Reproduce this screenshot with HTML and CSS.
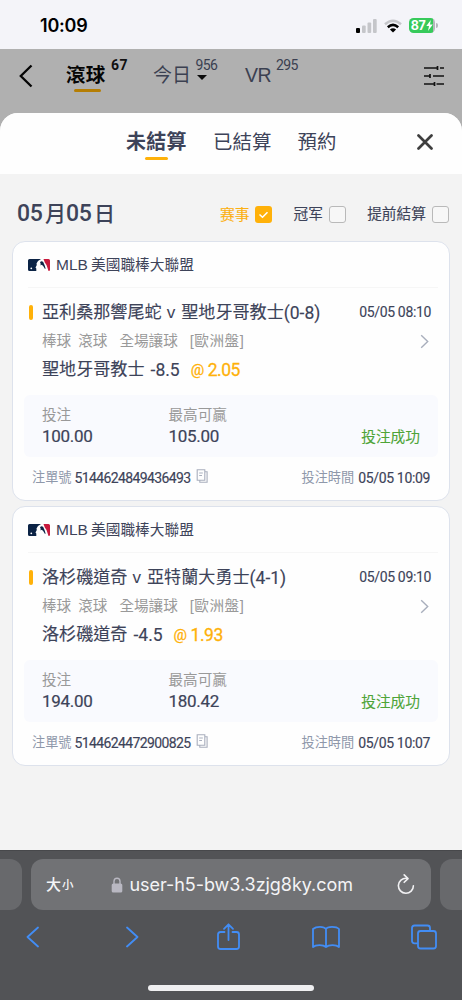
FILE: index.html
```html
<!DOCTYPE html>
<html lang="zh-Hant">
<head>
<meta charset="utf-8">
<meta name="viewport" content="width=device-width, initial-scale=1">
<title>注單</title>
<link rel="stylesheet" href="styles.css">
</head>
<body>
<svg width="0" height="0" class="defs" aria-hidden="true">
  <symbol id="mlb" viewBox="0 0 22 12">
    <path d="M1.500 0H13L10 2L8.500 4.500L8.800 6L7.500 8.500L8.300 9.500V12H1.500Q0 12 0 10.500V1.500Q0 0 1.500 0Z" fill="#0b2345"/>
    <path d="M15.500 0H20.500Q22 0 22 1.500V11.500L20.500 12L18.500 6L16.800 3.500Z" fill="#c8193c"/>
    <path d="M12 3.200Q13.500 1.600 15.200 3L16.700 6.500L17.600 9.500L17 10L15 6.800L13.500 5.800L12.600 6.500V4.500Z" fill="#0b2345"/>
    <circle cx="3.300" cy="9.300" r=".9" fill="#fff"/>
  </symbol>
  <symbol id="copy" viewBox="0 0 12 14">
    <path d="M1.200 .7H8.800V11.200H1.200ZM9 2.800H11.100V13.200H3.800V11.400M3.200 4H6.800M3.200 6.500H6" fill="none" stroke="#a9afbd" stroke-width="1.100"/>
  </symbol>
  <symbol id="more" viewBox="0 0 9 15">
    <path d="M1.200 1.200L7.700 7.500L1.200 13.800" fill="none" stroke="#a8aebc" stroke-width="1.400"/>
  </symbol>
</svg>

<header class="status">
  <span class="clock">10:09</span>
  <svg class="signal" width="22" height="14" viewBox="0 0 22 14"><rect x="0" y="9" width="4" height="5" rx="1" fill="#000"/><rect x="6" y="6.500" width="3.700" height="7.500" rx="1" fill="#c5c6ca"/><rect x="11.500" y="3.500" width="3.700" height="10.500" rx="1" fill="#c5c6ca"/><rect x="17" y="0" width="3.700" height="14" rx="1" fill="#c5c6ca"/></svg>
  <svg class="wifi" width="18" height="14" viewBox="0 0 18 14"><g fill="none" stroke-width="2.500"><path d="M1 5.200Q9 -1.800 17 5.200" stroke="#c5c6ca"/><path d="M3.800 8.200Q9 3.600 14.200 8.200" stroke="#000"/></g><path d="M9 13.500L5.900 10.500Q9 8 12.100 10.500Z" fill="#000"/></svg>
  <span class="battery"><span>87</span><svg width="7" height="11" viewBox="0 0 7 11"><path d="M4.800 0L.3 6H3L2 11L6.800 4.600H4Z" fill="#fff"/></svg></span><i class="nub"></i>
</header>

<nav class="nav">
  <svg class="nav-back" width="14" height="24" viewBox="0 0 14 24"><path d="M12.500 1.500L1.800 12L12.500 22.500" fill="none" stroke="#050505" stroke-width="2.300"/></svg>
  <span class="nav-item live">滾球</span><sup class="c67">67</sup>
  <span class="nav-item today">今日</span>
  <span class="today-side"><sup>956</sup><i class="caret"></i></span>
  <span class="nav-item vr">VR</span><sup>295</sup>
  <svg class="filter" width="20" height="20" viewBox="0 0 20 20"><path d="M0 2H14M16 2H20M0 10H6.500M9 10H20M0 18H10.500M12.500 18H20M13.500 0V4M6 8V12M10.500 16V20" fill="none" stroke="#111" stroke-width="1.700"/></svg>
</nav>

<main class="sheet">
  <div class="tabs">
    <span class="tab active">未結算</span><span class="tab">已結算</span><span class="tab">預約</span>
    <svg class="close" width="16" height="16" viewBox="0 0 16 16"><path d="M1.500 1.500L14.500 14.500M14.500 1.500L1.500 14.500" stroke="#3e3e3e" stroke-width="2.700" stroke-linecap="round"/></svg>
  </div>

  <div class="dayline">
    <h2><b>05</b>月<b>05</b>日</h2>
    <label class="chk on">赛事<i><svg width="17" height="17" viewBox="0 0 17 17"><path d="M4.500 8.500L7.500 11.300L12.500 6.200" fill="none" stroke="#fff" stroke-width="1.500"/></svg></i></label>
    <label class="chk">冠军<i></i></label>
    <label class="chk">提前結算<i></i></label>
  </div>

  <article class="card">
    <div class="league"><svg width="22" height="12"><use href="#mlb"/></svg><span class="mlb">MLB</span><span>美國職棒大聯盟</span></div>
    <div class="title"><i class="bar"></i><span>亞利桑那響尾蛇</span><span class="v">v</span><span>聖地牙哥教士</span><span class="din">(0-8)</span><time>05/05 08:10</time></div>
    <div class="meta"><span>棒球</span><span>滾球</span><span>全場讓球</span><span>[歐洲盤]</span><svg width="9" height="15"><use href="#more"/></svg></div>
    <div class="pick"><span>聖地牙哥教士</span><span class="din">-8.5</span><span class="at">@</span><span class="din odds">2.05</span></div>
    <div class="panel">
      <div><small>投注</small><b>100.00</b></div>
      <div><small>最高可贏</small><b>105.00</b></div>
      <em>投注成功</em>
    </div>
    <div class="foot"><span>注單號</span><b class="id">5144624849436493</b><svg width="12" height="14"><use href="#copy"/></svg><span class="when">投注時間</span><b class="stamp">05/05 10:09</b></div>
  </article>

  <article class="card">
    <div class="league"><svg width="22" height="12"><use href="#mlb"/></svg><span class="mlb">MLB</span><span>美國職棒大聯盟</span></div>
    <div class="title"><i class="bar"></i><span>洛杉磯道奇</span><span class="v">v</span><span>亞特蘭大勇士</span><span class="din">(4-1)</span><time>05/05 09:10</time></div>
    <div class="meta"><span>棒球</span><span>滾球</span><span>全場讓球</span><span>[歐洲盤]</span><svg width="9" height="15"><use href="#more"/></svg></div>
    <div class="pick"><span>洛杉磯道奇</span><span class="din">-4.5</span><span class="at">@</span><span class="din odds">1.93</span></div>
    <div class="panel">
      <div><small>投注</small><b>194.00</b></div>
      <div><small>最高可贏</small><b>180.42</b></div>
      <em>投注成功</em>
    </div>
    <div class="foot"><span>注單號</span><b class="id">5144624472900825</b><svg width="12" height="14"><use href="#copy"/></svg><span class="when">投注時間</span><b class="stamp">05/05 10:07</b></div>
  </article>
</main>

<footer class="browser">
  <div class="urls">
    <div class="side left"></div>
    <div class="url">
      <span class="big">大</span><span class="small">小</span>
      <svg class="lock" width="12" height="16" viewBox="0 0 12 16"><rect x=".7" y="6.500" width="10.600" height="9" rx="1.600" fill="#b9b8c2"/><path d="M3 7V4.300Q3 1.200 6 1.200T9 4.300V7" fill="none" stroke="#b9b8c2" stroke-width="1.400"/></svg>
      <span class="host">user-h5-bw3.3zjg8ky.com</span>
      <svg class="reload" width="18" height="21" viewBox="0 0 18 21"><path d="M9.500 4.300A7.500 7.500 0 1 0 16.400 11.700M7.200 .9L11 4.600L7.200 8.300" fill="none" stroke="#f1f1f3" stroke-width="1.600" stroke-linecap="round" stroke-linejoin="round"/></svg>
    </div>
    <div class="side right"></div>
  </div>
  <div class="tools">
    <svg class="t-back" width="13" height="22" viewBox="0 0 13 22"><path d="M12 1.500L1.500 11L12 20.500"/></svg>
    <svg class="t-next" width="13" height="22" viewBox="0 0 13 22"><path d="M1 1.500L11.500 11L1 20.500"/></svg>
    <svg class="t-share" width="23" height="28" viewBox="0 0 23 28"><path d="M7.500 9H3.500Q1 9 1 11.500V23.500Q1 26 3.500 26H19.500Q22 26 22 23.500V11.500Q22 9 19.500 9H15.500M11.500 17V1.500M7 5.800L11.500 1.300L16 5.800"/></svg>
    <svg class="t-book" width="28" height="24" viewBox="0 0 28 24"><path d="M14 4V22M14 4Q12.500 1.800 8 1.800T1 4V22Q3 20.200 7.500 20.200T14 22Q16 20.200 20.500 20.200T27 22V4Q25 1.800 20 1.800T14 4Z"/></svg>
    <svg class="t-tabs" width="26" height="26" viewBox="0 0 26 26"><path d="M6.500 19.300H3.500Q1 19.300 1 16.800V4Q1 1.500 3.500 1.500H16.500Q19 1.500 19 4V7M9.500 7H22.500Q25 7 25 9.500V22Q25 24.500 22.500 24.500H9.500Q7 24.500 7 22V9.500Q7 7 9.500 7Z"/></svg>
  </div>
  <div class="home"></div>
</footer>
</body>
</html>
```
FILE: styles.css
```css
* { box-sizing: border-box; }
body {
  margin: 0; width: 462px; height: 1000px; overflow: hidden;
  display: flex; flex-direction: column; background: #b0b0b0; color: #3d4359;
  font-family: "Liberation Sans", "Noto Sans CJK TC", sans-serif; line-height: 1; white-space: nowrap;
}
.defs { display: none; }
i, em { font-style: normal; }
b { font-weight: 400; }
svg { flex: none; display: block; }

.status { height: 49px; flex: none; display: flex; align-items: center; padding: 2px 24px 0 40px; background: #f4f4f9; }
.clock { font: 600 18px/20px Inter, sans-serif; color: #000; width: 316px; letter-spacing: -.2px; }
.wifi { margin-left: 6px; }
.battery {
  width: 26px; height: 15px; margin-left: 7px; border-radius: 4.500px; display: flex; align-items: center; justify-content: center; gap: 1px;
  background: linear-gradient(90deg, #37ca5b 23.500px, #b5b6bb 23.500px); color: #fff; font: 700 12.500px/15px Inter, sans-serif; letter-spacing: -.4px;
}
.nub { width: 1.500px; height: 5px; margin-left: 1px; border-radius: 0 2px 2px 0; background: #b5b6bb; }

.nav { height: 64px; flex: none; display: flex; align-items: flex-start; padding: 0 18px 0 19px; }
.nav-back { margin-top: 15px; }
.nav sup { font: 400 14px/14px Roboto, sans-serif; letter-spacing: -.6px; color: #3a3f50; margin: 9px 0 0 5px; }
.nav .c67 { font-weight: 700; color: #111; letter-spacing: .4px; width: 21px; }
.nav-item { font-size: 19.500px; line-height: 28px; margin-top: 12px; color: #3b4051; }
.live { margin-left: 33px; width: 40px; color: #050505; font-weight: 700; letter-spacing: .3px; }
.live::after { content: ""; display: block; width: 27px; height: 3px; margin: 0 0 0 8px; border-radius: 2px; background: #b57e04; }
.today { margin: 13px 0 0 21px; width: 40px; font-size: 19px; }
.today-side { display: flex; flex-direction: column; width: 26px; }
.today-side sup { margin-left: 2.500px; }
.caret { border: 5px solid transparent; border-top-color: #0a0a0a; border-bottom: 0; margin: 3px 0 0 4px; width: 0; }
.vr { margin-left: 26px; width: 26px; letter-spacing: -.4px; }
.filter { margin: 17px 0 0 auto; }

.sheet { height: 737px; flex: none; background: #f3f3f3; border-radius: 18px 18px 0 0; overflow: hidden; }
.tabs { height: 61px; display: flex; padding: 15px 29px 0 126px; gap: 26px; background: #fefefe; }
.tab { font-size: 19.400px; line-height: 28px; letter-spacing: .1px; }
.tab.active { font-weight: 700; font-size: 20px; letter-spacing: .3px; width: 61px; }
.active::after { content: ""; display: block; width: 23px; height: 3px; margin: 1px auto 0; border-radius: 2px; background: #feb10a; }
.close { margin: 6px 0 0 auto; }

.dayline { height: 67px; display: flex; align-items: center; padding: 13px 12px 0 17px; }
h2 { margin: 0; width: 203px; font-size: 21px; line-height: 26px; font-weight: 500; display: flex; }
h2 b { font: 500 23px/26px Roboto, sans-serif; width: 28px; letter-spacing: -.2px; }
.chk { display: flex; align-items: center; gap: 6px; font-size: 14.700px; line-height: 20px; -webkit-text-stroke: .12px; margin-right: 21.200px; }
.chk:last-child { margin: 0; }
.chk i { width: 17px; height: 17px; border: 1px solid #b9b9b9; border-radius: 3px; background: #f7f7f7; margin-top: 1px; }
.chk.on { color: #fcb012; font-family: "Noto Sans CJK SC", sans-serif; }
.chk.on i { border: 0; background: #ffb109; }

.card { height: 260px; margin: 0 12px 5px; border: 1px solid #dde2ec; border-radius: 13px; background: #fefefe; padding: 0 11px; }
.card > div { display: flex; align-items: center; }
.league { height: 46px; margin-left: 4px; padding-top: 1px; border-bottom: 1px solid #f6f6f6; font-size: 14.700px; }
.mlb { font-size: 15.500px; margin: 0 5px 0 6px; width: 30px; }
.title { height: 49px; font-size: 17.100px; -webkit-text-stroke: .12px; }
.bar { width: 4px; height: 15px; border-radius: 2px; background: #ffb109; margin: 0 9px 0 5px; }
.v { margin: 0 6px 0 5px; -webkit-text-stroke: 0; }
.din { font: 400 17.500px/20px Roboto, sans-serif; -webkit-text-stroke: .15px; }
.title time { font: 400 14px/16px Roboto, sans-serif; letter-spacing: -.35px; margin: -2px 7px 0 auto; }
.meta { height: 9px; padding-left: 18px; color: #999; font-size: 14.600px; }
.meta span:nth-child(2) { margin-left: 7px; }
.meta span:nth-child(3) { margin-left: 12px; }
.meta span:nth-child(4) { margin-left: 12px; letter-spacing: .5px; }
.meta svg { margin: 0 9px 0 auto; }
.pick { height: 49px; padding: 0 0 1px 18px; font-size: 17.100px; -webkit-text-stroke: .12px; }
.pick .din { margin-left: 6px; }
.at { font: 400 15px/20px Roboto, sans-serif; width: 13px; margin-left: 11px; color: #feb10a; -webkit-text-stroke: .3px; }
.pick .odds { color: #feb10a; margin-left: 4px; letter-spacing: -.5px; -webkit-text-stroke: .3px; }
.panel { height: 62px; padding-left: 18px; border-radius: 6px; background: #f9fafe; }
.panel div { width: 126.500px; display: flex; flex-direction: column; }
.panel small { font-size: 14.600px; line-height: 20px; color: #999; }
.panel b { font: 400 17px/23px Roboto, sans-serif; letter-spacing: -.3px; -webkit-text-stroke: .2px; }
.panel em { color: #4ea437; font-size: 14.700px; -webkit-text-stroke: .1px; margin: 22px 18px 0 auto; }
.foot { height: 42px; padding: 0 8px; font-size: 13.200px; color: #8f98aa; }
.foot b { font: 400 14px/18px Roboto, sans-serif; color: #3d4359; -webkit-text-stroke: .15px; }
.foot .id { letter-spacing: -.63px; margin: 0 6px 0 3px; width: 115px; }
.foot svg { margin-top: -4px; }
.when { margin-left: auto; }
.stamp { margin-left: 4px; letter-spacing: -.35px; }

.browser { height: 150px; flex: none; background: #525356; border-top: 1px solid #47484b; padding-top: 8px; }
.urls { display: flex; gap: 9px; height: 51px; }
.url { width: 400px; background: #717275; border-radius: 12px; display: flex; align-items: center; padding: 0 16px 0 15px; color: #f4f4f6; }
.side { width: 22px; background: #68696c; }
.left { border-radius: 0 12px 12px 0; }
.right { border-radius: 12px 0 0 12px; }
.big { font-size: 15px; font-weight: 500; }
.small { font-size: 11.500px; font-weight: 500; margin: 3px 0 0 1px; }
.lock { margin-left: 37px; }
.host { font: 400 18px/24px Inter, sans-serif; margin-left: 7px; width: 224px; letter-spacing: -.05px; }
.reload { margin-left: auto; }
.tools { display: flex; align-items: center; height: 54px; padding-left: 26px; }
.tools svg { fill: none; stroke: #428df5; stroke-width: 1.800; stroke-linecap: round; stroke-linejoin: round; }
.t-next { margin-left: 87px; }
.t-share { margin-left: 78px; }
.t-book { margin-left: 72px; }
.t-tabs { margin-left: 71px; }
.home { width: 166px; height: 6px; margin: 21px auto 0; border-radius: 3px; background: #efeff1; }
```
